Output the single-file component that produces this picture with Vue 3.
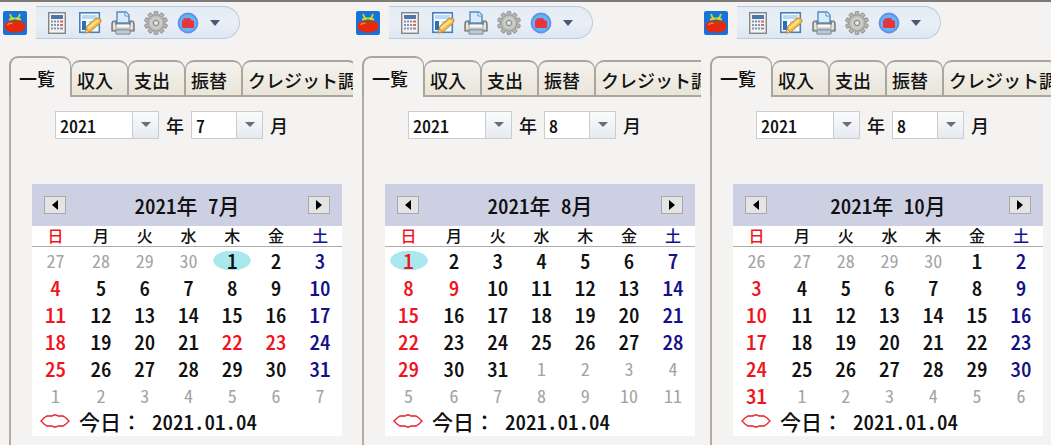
<script setup>
import { ref } from 'vue'

const weekdays = ['日', '月', '火', '水', '木', '金', '土']
const tabs = ['一覧', '収入', '支出', '振替', 'クレジット調']
const years = ['2020', '2021', '2022']
const months = Array.from({ length: 12 }, (_, i) => String(i + 1))

function buildWeeks(year, month, holidays, marked) {
  const lead = new Date(year, month - 1, 1).getDay()
  return Array.from({ length: 6 }, (_, w) =>
    weekdays.map((_, d) => {
      const date = new Date(year, month - 1, 1 - lead + w * 7 + d)
      const inMonth = date.getMonth() === month - 1
      const day = date.getDate()
      return {
        day,
        muted: !inMonth,
        sun: inMonth && (d === 0 || holidays.includes(day)),
        sat: inMonth && d === 6,
        marked: inMonth && marked === day
      }
    })
  )
}

const panes = ref(
  [
    { month: 7, picked: '7', holidays: [22, 23], marked: 1 },
    { month: 8, picked: '8', holidays: [9], marked: 1 },
    { month: 10, picked: '8', holidays: [], marked: 0 }
  ].map((p) => ({
    ...p,
    year: '2021',
    tab: 0,
    weeks: buildWeeks(2021, p.month, p.holidays, p.marked)
  }))
)
</script>

<template>
  <main class="screens">
    <section v-for="(pane, p) in panes" :key="p" class="pane">
      <header class="topbar">
        <svg class="logo" viewBox="0 0 24 24" aria-hidden="true">
          <rect width="24" height="24" rx="2" fill="#1673dc" />
          <path d="M12 10.500C6 8.500 1.500 11 1.500 15.500c0 4.500 5 6 10.500 6s10.500-1.500 10.500-6c0-4.500-4.500-7-10.500-5z" fill="#e5290f" />
          <path d="M4.500 14c1-1.500 3-2 5-1.500" stroke="#ff7650" stroke-width="1.600" fill="none" />
          <path d="M7 3l1.500 3.500L12 8l3.500-1.500L17 3M6 8.500l6-1 6 1" stroke="#c8da32" stroke-width="1.800" fill="none" />
          <path d="M8 10.500l4-1.500 4 1.500" stroke="#3d7a20" stroke-width="1.200" fill="none" />
        </svg>
        <div class="toolbar">
          <button class="tool" aria-label="電卓">
            <svg width="18" height="22" viewBox="0 0 18 22">
              <rect x=".7" y=".7" width="16.6" height="20.6" fill="#f4f3f1" stroke="#858585" stroke-width="1.4" />
              <rect x="3" y="3" width="12" height="4" fill="#4c76af" />
              <path d="M3 9.5h8M3 13h8M3 16.500h8" stroke="#8293ae" stroke-width="2" stroke-dasharray="2 1" />
              <path d="M12 9.500h3M12 13h3" stroke="#d7685c" stroke-width="2" />
              <path d="M12 16.500h3" stroke="#8293ae" stroke-width="2" />
            </svg>
          </button>
          <button class="tool" aria-label="編集">
            <svg width="24" height="24" viewBox="0 0 24 24">
              <rect x="1.800" y="1.800" width="19.500" height="19.500" fill="#f7fbff" stroke="#4581bc" stroke-width="1.600" />
              <rect x="4" y="4" width="15" height="4" fill="#bcd7f1" />
              <rect x="4" y="10" width="4" height="9" fill="#2d6fb5" />
              <path d="M11 11h7M11 14h4" stroke="#a9c8e5" stroke-width="1.500" />
              <path d="M7 22l2-7L17.500 7.500q4-1.500 5.500 1 .500 3-2 4.500L12 21z" fill="#f4b944" stroke="#c08a3a" />
              <path d="M10 17.500l10-8" stroke="#ffe18c" stroke-width="2.500" />
              <path d="M7 22l1-4 3 3z" fill="#efcfaa" stroke="#a8763b" stroke-width=".6" />
            </svg>
          </button>
          <button class="tool" aria-label="印刷">
            <svg width="24" height="24" viewBox="0 0 24 24">
              <path d="M6 12V1h9l3 3v8z" fill="#d7ebfc" stroke="#548cc5" stroke-width="1.400" />
              <path d="M14 1v4h4" fill="#fff" stroke="#548cc5" />
              <path d="M3 10h2v3h14v-3h2q2 0 2 3v7H1v-7q0-3 2-3z" fill="#c4c4c1" stroke="#666" stroke-width="1.200" />
              <path d="M6 15h12" stroke="#f8f8f8" stroke-width="3" />
              <path d="M3 12v6M21 12v6" stroke="#eeeeec" stroke-width="1.500" />
              <path d="M5 19h14v4H5z" fill="#e6f1fa" stroke="#757575" />
              <path d="M6 21h12" stroke="#73a7d5" />
            </svg>
          </button>
          <button class="tool" aria-label="設定">
            <svg width="24" height="24" viewBox="0 0 24 24">
              <g fill="#b4b4b1" stroke="#858582" stroke-width=".7">
                <rect v-for="a in 10" :key="a" x="10" y=".500" width="4" height="6" rx="1" :transform="`rotate(${a * 36} 12 12)`" />
              </g>
              <circle cx="12" cy="12" r="8" fill="#bdbdba" stroke="#90908d" stroke-width=".6" />
              <circle cx="12" cy="12" r="5" fill="none" stroke="#d2d2cf" stroke-width="1.500" />
              <circle cx="12" cy="12" r="2.500" fill="#e4ebf2" stroke="#858582" />
            </svg>
          </button>
          <button class="tool" aria-label="アプリ">
            <svg width="22" height="22" viewBox="0 0 22 22">
              <circle cx="11" cy="11" r="9.500" fill="#62b4f5" stroke="#6390e5" stroke-width="1.800" />
              <path d="M6 8l2-2h5l1 2 3 1v7H7q-1 0-2-1V9z" fill="#e8343c" />
              <path d="M6 8l2-1.500h3" stroke="#af597a" stroke-width="1.200" fill="none" />
            </svg>
          </button>
          <button class="tool" aria-label="その他">
            <svg width="12" height="6" viewBox="0 0 12 6"><path d="M1 0h10L6 6z" fill="#465a73" /></svg>
          </button>
        </div>
      </header>

      <nav class="tabs" role="tablist">
        <button
          v-for="(tab, t) in tabs"
          :key="tab"
          class="tab"
          :class="{ active: pane.tab === t }"
          role="tab"
          :aria-selected="pane.tab === t"
          @click="pane.tab = t"
        >{{ tab }}</button>
      </nav>

      <div class="body">
        <div class="pickers">
          <span class="combo">
            <select :id="`year-${p}`" v-model="pane.year" class="year">
              <option v-for="y in years" :key="y">{{ y }}</option>
            </select>
            <span class="drop"><svg width="10" height="6" viewBox="0 0 10 6"><path d="M0 0h10L5 5z" fill="#686e76" /></svg></span>
          </span>
          <label :for="`year-${p}`">年</label>
          <span class="combo">
            <select :id="`month-${p}`" v-model="pane.picked" class="month">
              <option v-for="m in months" :key="m">{{ m }}</option>
            </select>
            <span class="drop"><svg width="10" height="6" viewBox="0 0 10 6"><path d="M0 0h10L5 5z" fill="#686e76" /></svg></span>
          </span>
          <label :for="`month-${p}`">月</label>
        </div>

        <div class="calendar">
          <div class="cal-head">
            <button class="step" aria-label="前の月">
              <svg width="8" height="12" viewBox="0 0 8 12"><path d="M7 1v10L1 6z" fill="#000" /></svg>
            </button>
            <h2>2021年 {{ pane.month }}月</h2>
            <button class="step" aria-label="次の月">
              <svg width="8" height="12" viewBox="0 0 8 12"><path d="M1 1v10l6-5z" fill="#000" /></svg>
            </button>
          </div>
          <table>
            <thead>
              <tr>
                <th v-for="(w, i) in weekdays" :key="w" scope="col" :class="{ sun: i === 0, sat: i === 6 }">{{ w }}</th>
              </tr>
            </thead>
            <tbody>
              <tr v-for="(week, w) in pane.weeks" :key="w">
                <td v-for="(c, i) in week" :key="i" :class="{ muted: c.muted, sun: c.sun, sat: c.sat }">
                  <span :class="{ marked: c.marked }">{{ c.day }}</span>
                </td>
              </tr>
            </tbody>
          </table>
          <div class="today">
            <svg width="30" height="16" viewBox="0 0 30 16" aria-hidden="true">
              <path d="M1 8l3-3 3-2h5l2-1h2l2 1h5l3 2 3 3-3 3-3 2h-5l-2 1h-2l-2-1H7l-3-2z" fill="none" stroke="#e81c24" stroke-width="1.300" />
            </svg>
            <span class="today-label">今日：</span>
            <time datetime="2021-01-04">2021.01.04</time>
          </div>
        </div>
      </div>
    </section>
  </main>
</template>

<style>
body {
  margin: 0;
}
</style>

<style scoped>
* {
  box-sizing: border-box;
}
.screens {
  display: grid;
  grid-template-columns: 353fr 348fr 350fr;
  min-height: 100vh;
  background: #f4f3f1;
  border-top: 2px solid #7d7b7a;
  color: #111;
  font-family: "Noto Sans CJK JP", sans-serif;
  font-size: 18px;
  font-weight: 500;
  font-feature-settings: "hwid";
}
button,
select {
  font: inherit;
  font-feature-settings: inherit;
  color: inherit;
  margin: 0;
  padding: 0;
}
.pane {
  display: flex;
  flex-direction: column;
  min-width: 0;
  overflow: hidden;
}
.topbar {
  display: flex;
  align-items: center;
  gap: 9px;
  padding: 4px 0 0 3px;
}
.logo {
  width: 24px;
  height: 24px;
}
.toolbar {
  display: flex;
  align-items: center;
  gap: 9px;
  height: 33px;
  padding: 0 18px 0 12px;
  border: 1px solid #b7cbe2;
  border-left: 0;
  border-radius: 0 17px 17px 0;
  background: linear-gradient(#e3ebf4, #e9eff6 50%, #dde7f2);
}
.tool {
  display: flex;
  border: 0;
  background: none;
}
.tool:first-child {
  margin-right: 3px;
}
.tool:last-child {
  margin-left: 1px;
}
.tabs {
  display: flex;
  align-items: flex-end;
  margin: 17px 0 0 9px;
  overflow: hidden;
}
.tab {
  flex: none;
  height: 37px;
  padding: 0 14px 0 5px;
  border: 2px solid #aaa59f;
  border-left-width: 1px;
  border-right-width: 1px;
  border-radius: 9px 9px 0 0;
  background: linear-gradient(#f4f2ed, #e9e5d8);
  line-height: 36px;
  white-space: nowrap;
}
.tab:last-child {
  padding-right: 0;
}
.tab.active {
  height: 41px;
  padding: 0 15px 0 8px;
  border-left-width: 2px;
  border-bottom: 0;
  background: #f4f3f1;
  line-height: 40px;
}
.body {
  flex: 1;
  margin-left: 9px;
  padding: 14px 0 8px 21px;
  border-left: 2px solid #b0aca9;
}
.pickers {
  display: flex;
  align-items: center;
  gap: 7px;
  height: 28px;
  margin-left: 23px;
}
.combo {
  display: grid;
  grid-template-columns: 1fr 26px;
  height: 28px;
  border: 1px solid #c9ccd1;
  background: #fff;
}
.combo select {
  grid-area: 1 / 1 / 2 / 3;
  appearance: none;
  border: 0;
  border-radius: 0;
  background: none;
  padding-left: 4px;
  line-height: 26px;
}
.year {
  width: 102px;
}
.month {
  width: 70px;
}
.drop {
  grid-area: 1 / 2;
  display: grid;
  place-items: center;
  border-left: 1px solid #c9ccd1;
  background: linear-gradient(#fafbfc, #e6eaf0);
  pointer-events: none;
}
.calendar {
  width: 310px;
  max-width: 100%;
  margin-top: 45px;
  background: #fff;
}
.cal-head {
  display: flex;
  align-items: center;
  justify-content: space-between;
  height: 42px;
  padding: 0 12px;
  background: #cdd0e2;
}
.cal-head h2 {
  margin: 0;
  font-size: 21px;
  font-weight: 500;
  line-height: 30px;
}
.step {
  display: grid;
  place-items: center;
  width: 22px;
  height: 18px;
  border: 1px solid #a9a9a9;
  background: #e4e4e4;
}
table {
  width: 100%;
  table-layout: fixed;
  border-collapse: collapse;
}
th {
  height: 20px;
  padding: 0;
  border-bottom: 1px solid #aaa;
  font-size: 16px;
  font-weight: 500;
  line-height: 19px;
}
th:first-child {
  width: 47px;
}
th:last-child {
  width: 44px;
}
td {
  height: 27px;
  padding: 0;
  text-align: center;
  font-size: 21px;
  line-height: 27px;
}
td span {
  display: block;
}
.marked {
  width: 38px;
  margin: 0 auto;
  background: radial-gradient(19px 10px, #a9e9ee 97%, transparent);
}
.sun {
  color: #f01420;
}
.sat {
  color: #15108a;
}
.muted {
  color: #a3a3a3;
  font-size: 18px;
  font-weight: 400;
}
.today {
  display: flex;
  align-items: center;
  padding: 0 0 3px 8px;
  font-size: 21px;
  line-height: 24px;
}
.today-label {
  margin: 0 10px 0 9px;
  font-feature-settings: normal;
}
</style>
